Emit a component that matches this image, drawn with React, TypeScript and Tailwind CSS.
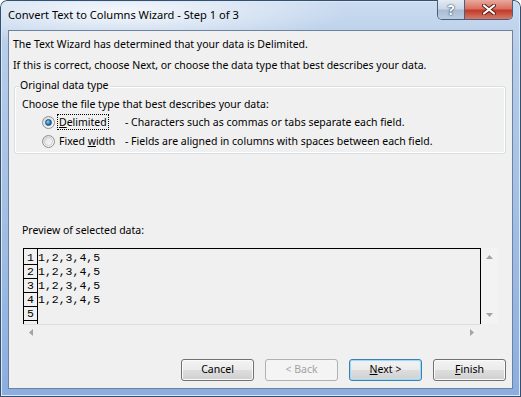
import React from 'react'

const ui = "font-['Noto_Sans',sans-serif] text-[10.5px] text-black"

function Radio({ checked }: { checked?: boolean }) {
  return (
    <span className="flex h-[13px] w-[13px] shrink-0 items-center justify-center rounded-full border border-[#8e9093] bg-[linear-gradient(135deg,#d8d8d8,#fcfcfc)]">
      {checked ? (
        <span className="h-[7px] w-[7px] rounded-full border border-[#1b4f80] bg-[radial-gradient(circle_at_35%_35%,#8fd0f5,#2b79b5_55%,#0f3d68)]" />
      ) : (
        <span className="h-[9px] w-[9px] rounded-full border border-[#cfcfcf] bg-[linear-gradient(135deg,#e2e2e2,#f9f9f9)]" />
      )}
    </span>
  )
}

function Arrow({ dir }: { dir: 'up' | 'down' | 'left' | 'right' }) {
  const pts = {
    up: '0,4 3.5,0 7,4',
    down: '0,0 7,0 3.5,4',
    left: '4,0 4,7 0,3.5',
    right: '0,0 0,7 4,3.5',
  }[dir]
  const vertical = dir === 'up' || dir === 'down'
  return (
    <svg width={vertical ? 7 : 4} height={vertical ? 4 : 7} viewBox={vertical ? '0 0 7 4' : '0 0 4 7'}>
      <polygon points={pts} fill="#a3a3a3" />
    </svg>
  )
}

function Button({ children, kind = 'normal' }: { children: React.ReactNode; kind?: 'normal' | 'disabled' | 'default' }) {
  const styles = {
    normal:
      'border-[#707070] bg-[linear-gradient(to_bottom,#f3f3f3_0%,#ebebeb_48%,#dddddd_52%,#cfcfcf_100%)] shadow-[inset_0_0_0_1px_#fbfbfb]',
    disabled: 'border-[#adb2b5] bg-[#f4f4f4] text-[#a3a3a3]',
    default:
      'border-[#3c7fb1] bg-[linear-gradient(to_bottom,#f3f3f3_0%,#ebebeb_48%,#dddddd_52%,#cfcfcf_100%)] shadow-[inset_0_0_0_1px_#9fdaf5,inset_0_0_2px_1px_#c8ecfb]',
  }[kind]
  return (
    <div className={`flex h-[22px] w-[73px] items-center justify-center rounded-[3px] border ${styles}`}>
      {children}
    </div>
  )
}

function TitleBar() {
  return (
    <div className="flex h-[30px] justify-between">
      <div className="self-center text-[11.1px] leading-[30px] text-[#000]">Convert Text to Columns Wizard - Step 1 of 3</div>
      <div className="flex h-[20px] self-start overflow-hidden rounded-b-[5px] border border-t-0 border-[#4a5f7d]">
        <div className="flex w-[27px] items-center justify-center border-r border-[#4a5f7d] bg-[linear-gradient(to_bottom,#e3eaf3_0%,#cbd8e8_45%,#a9bcd4_55%,#bccde2_100%)]">
          <span className="text-[14px] font-bold leading-none text-white [text-shadow:0_0_2px_#2c3e55,0_0_1px_#2c3e55]">?</span>
        </div>
        <div className="flex w-[47px] items-center justify-center bg-[linear-gradient(to_bottom,#e9aa9e_0%,#d9705f_45%,#c23a28_55%,#d47a69_100%)]">
          <svg width="14" height="11" viewBox="0 0 14 11">
            <path d="M2 1.5 L12 9.5 M12 1.5 L2 9.5" stroke="#5a1d16" strokeWidth="4" strokeLinecap="round" />
            <path d="M2 1.5 L12 9.5 M12 1.5 L2 9.5" stroke="#ffffff" strokeWidth="2.2" strokeLinecap="round" />
          </svg>
        </div>
      </div>
    </div>
  )
}

export default function App() {
  const rows = [1, 2, 3, 4, 5]
  return (
    <div className={`h-[397px] w-[521px] overflow-hidden bg-white ${ui}`}>
      <div className="flex h-[397px] w-[521px] flex-col rounded-t-[7px] px-[8px] pb-[8px] shadow-[inset_0_0_0_1px_#34506f,inset_0_0_0_2px_#dce8f6] bg-[radial-gradient(ellipse_230px_34px_at_120px_12px,rgba(255,255,255,0.8),transparent),linear-gradient(to_bottom,#cbdcf0,#b7cde9_12%,#9fbde4_60%,#8cade0)]">
        <TitleBar />

        {/* Client area */}
        <div className="flex h-[359px] flex-col border border-[#6c829f] bg-[#f0f0f0] pt-[3px] pb-[7px]">
          <div className="ml-[4px] leading-[21px]">The Text Wizard has determined that your data is Delimited.</div>
          <div className="ml-[4px] leading-[21px]">If this is correct, choose Next, or choose the data type that best describes your data.</div>

          {/* Group box */}
          <div className="relative mt-[10px] ml-[5px] mr-[6px] h-[68px] rounded-[3px] border border-[#d5dfe5] pl-[7px] pt-[9px] pb-[2px] shadow-[inset_0_0_0_1px_#ffffff]">
            <div className="absolute -top-[10px] left-[4px] bg-[#f0f0f0] px-[1px] leading-[17px]">Original data type</div>
            <div className="h-[17px] leading-[17px]">Choose the file type that best describes your data:</div>
            <div className="flex h-[19px] items-center">
              <div className="ml-[20px]"><Radio checked /></div>
              <div className="ml-[2px] w-[68px]">
                <span className="border border-dotted border-black px-[1px] leading-[14px]">
                  <span className="underline">D</span>elimited
                </span>
              </div>
              <div>- Characters such as commas or tabs separate each field.</div>
            </div>
            <div className="flex h-[19px] items-center">
              <div className="ml-[20px]"><Radio /></div>
              <div className="ml-[2px] w-[68px]">
                <span className="border border-transparent px-[1px] leading-[14px]">
                  Fixed <span className="underline">w</span>idth
                </span>
              </div>
              <div>- Fields are aligned in columns with spaces between each field.</div>
            </div>
          </div>

          <div className="mt-[66px] ml-[13px] h-[21px] leading-[21px]">Preview of selected data:</div>

          {/* Preview */}
          <div className="mt-[7px] ml-[14px] flex w-[475px]">
            <div className="flex w-[458px] flex-col">
              <div className="flex h-[76px] border-x border-t border-black font-['Liberation_Mono',monospace] text-[11.5px]">
                <div className="w-[14px] border-r border-black pt-[2px]">
                  {rows.map(r => (
                    <div key={r} className="h-[14px] border-b border-black text-center leading-[13px]">{r}</div>
                  ))}
                </div>
                <div className="pt-[2px]">
                  {rows.slice(0, 4).map(r => (
                    <div key={r} className="h-[14px] leading-[13px]">1,2,3,4,5</div>
                  ))}
                </div>
              </div>
              <div className="flex h-[16px] items-center justify-between border-t border-[#dedede] pl-[6px] pr-[7px]">
                <Arrow dir="left" />
                <Arrow dir="right" />
              </div>
            </div>
            <div className="flex h-[76px] w-[17px] flex-col items-center justify-between bg-[#f3f3f3] py-[7px]">
              <Arrow dir="up" />
              <Arrow dir="down" />
            </div>
          </div>

          {/* Buttons */}
          <div className="mt-[19px] flex justify-end gap-[11px] pr-[6px]">
            <Button>Cancel</Button>
            <Button kind="disabled">&lt; Back</Button>
            <Button kind="default"><span><span className="underline">N</span>ext &gt;</span></Button>
            <Button><span><span className="underline">F</span>inish</span></Button>
          </div>
        </div>
      </div>
    </div>
  )
}
